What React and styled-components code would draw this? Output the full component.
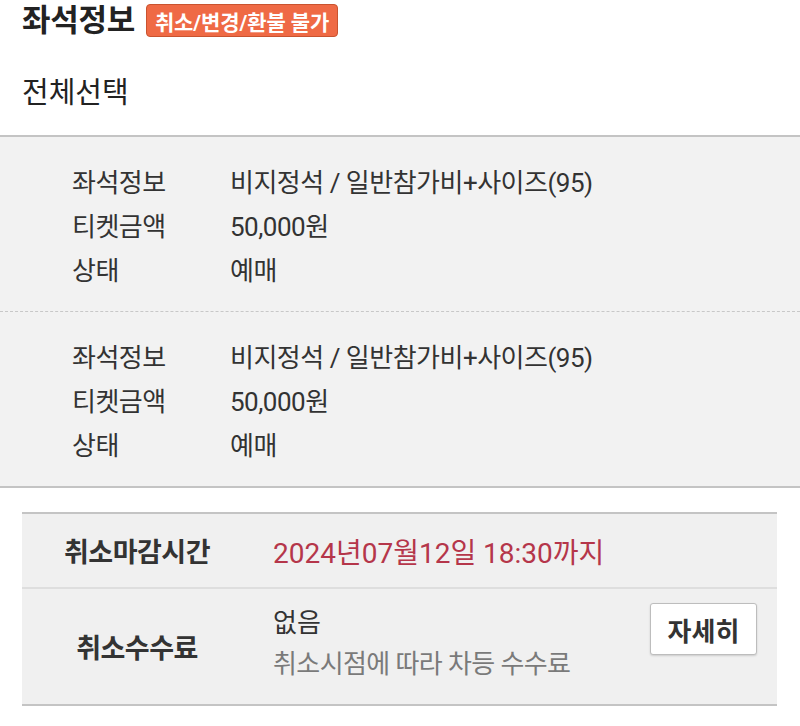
import React from 'react'
import styled, { createGlobalStyle } from 'styled-components'

const GlobalStyle = createGlobalStyle`
  body {
    margin: 0;
    background: #fff;
    font-family: "Roboto", "Noto Sans CJK KR", "Noto Sans", sans-serif;
    color: #222;
  }
`

const tickets = [
  { seat: '비지정석 / 일반참가비+사이즈(95)', price: '50,000원', status: '예매' },
  { seat: '비지정석 / 일반참가비+사이즈(95)', price: '50,000원', status: '예매' },
]

const App = () => {
  return (
    <Page>
      <GlobalStyle />
      <TitleRow>
        <Title>좌석정보</Title>
        <Badge>취소/변경/환불 불가</Badge>
      </TitleRow>
      <SelectAll>전체선택</SelectAll>
      <TicketList>
        {tickets.map((t, i) => (
          <TicketBlock key={i} dashed={i < tickets.length - 1}>
            <InfoRow>
              <InfoLabel>좌석정보</InfoLabel>
              <InfoValue>{t.seat}</InfoValue>
            </InfoRow>
            <InfoRow>
              <InfoLabel>티켓금액</InfoLabel>
              <InfoValue>{t.price}</InfoValue>
            </InfoRow>
            <InfoRow>
              <InfoLabel>상태</InfoLabel>
              <InfoValue>{t.status}</InfoValue>
            </InfoRow>
          </TicketBlock>
        ))}
      </TicketList>
      <CancelBox>
        <CancelRow height={73}>
          <CancelLabel>취소마감시간</CancelLabel>
          <Deadline>2024년07월12일 18:30까지</Deadline>
        </CancelRow>
        <CancelRow height={115} last>
          <CancelLabel>취소수수료</CancelLabel>
          <FeeInfo>
            <FeeMain>없음</FeeMain>
            <FeeSub>취소시점에 따라 차등 수수료</FeeSub>
          </FeeInfo>
          <DetailButton>자세히</DetailButton>
        </CancelRow>
      </CancelBox>
    </Page>
  )
}

export default App

const Page = styled.div`
  width: 800px;
  height: 726px;
  overflow: hidden;
  background: #fff;
`

const TitleRow = styled.div`
  display: flex;
  align-items: center;
  gap: 11px;
  padding: 4px 0 0 22px;
  height: 33px;
`

const Title = styled.h1`
  margin: 0;
  font-size: 31px;
  font-weight: 700;
  color: #222;
  line-height: 33px;
  letter-spacing: -0.3px;
`

const Badge = styled.span`
  display: inline-flex;
  align-items: center;
  height: 31px;
  padding: 0 8px;
  background: #ef6a45;
  border: 1px solid #c9532f;
  border-radius: 4px;
  color: #fff;
  font-size: 21px;
  font-weight: 700;
  letter-spacing: -0.1px;
`

const SelectAll = styled.div`
  padding-left: 22px;
  margin-top: 37px;
  height: 38px;
  line-height: 38px;
  font-size: 29px;
  color: #222;
  letter-spacing: 0;
`

const TicketList = styled.div`
  margin-top: 23px;
  background: #f2f2f2;
  border-top: 2px solid #c4c4c4;
  border-bottom: 2px solid #c4c4c4;
`

const TicketBlock = styled.div`
  padding: 21px 0 21px 72px;
  border-bottom: ${p => (p.dashed ? '1px dashed #c8c8c8' : 'none')};
`

const InfoRow = styled.div`
  display: flex;
  height: 44px;
  align-items: center;
  font-size: 26px;
  color: #333;
`

const InfoLabel = styled.span`
  width: 158px;
  letter-spacing: -0.5px;
`

const InfoValue = styled.span`
  letter-spacing: -0.5px;
`

const CancelBox = styled.div`
  margin: 24px 23px 0 22px;
  background: #f0f0f0;
  border-top: 2px solid #c4c4c4;
  border-bottom: 2px solid #c4c4c4;
`

const CancelRow = styled.div`
  display: flex;
  align-items: center;
  height: ${p => p.height}px;
  padding-right: 20px;
  border-bottom: ${p => (p.last ? 'none' : '2px solid #dedede')};
`

const CancelLabel = styled.div`
  width: 230px;
  text-align: center;
  font-size: 27px;
  font-weight: 700;
  color: #333;
  letter-spacing: -0.5px;
`

const Deadline = styled.div`
  margin-left: 21px;
  font-size: 28px;
  color: #b5364a;
  letter-spacing: 0;
`

const FeeInfo = styled.div`
  flex: 1;
  margin-left: 21px;
  margin-bottom: 6px;
  display: flex;
  flex-direction: column;
  gap: 7px;
  line-height: 34px;
`

const FeeMain = styled.div`
  font-size: 26px;
  color: #333;
`

const FeeSub = styled.div`
  font-size: 26px;
  color: #7a7a7a;
  letter-spacing: -0.6px;
`

const DetailButton = styled.button`
  align-self: flex-start;
  margin-top: 14px;
  width: 107px;
  height: 52px;
  background: #fff;
  border: 1px solid #bdbdbd;
  border-radius: 3px;
  box-shadow: 0 1px 2px rgba(0, 0, 0, 0.15);
  font-family: "Noto Sans CJK KR", "Noto Sans", sans-serif;
  font-size: 26px;
  font-weight: 700;
  color: #333;
  padding: 0;
`
